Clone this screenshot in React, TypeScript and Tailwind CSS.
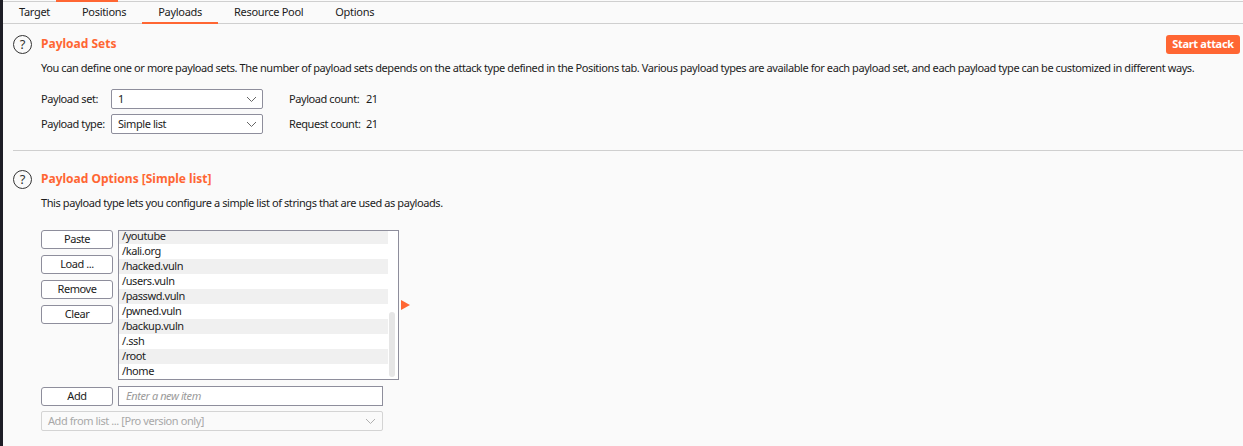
import React from 'react';

const tabs = ['Target', 'Positions', 'Payloads', 'Resource Pool', 'Options'];
const items = [
  '/youtube',
  '/kali.org',
  '/hacked.vuln',
  '/users.vuln',
  '/passwd.vuln',
  '/pwned.vuln',
  '/backup.vuln',
  '/.ssh',
  '/root',
  '/home',
];

const Help = () => (
  <div className="w-[19px] h-[19px] rounded-full border border-[#333] flex items-center justify-center text-[13px] leading-none tracking-normal text-[#333]">
    ?
  </div>
);

const Chevron = ({ color = '#666' }: { color?: string }) => (
  <svg width="11" height="7" viewBox="0 0 11 7" fill="none">
    <path d="M1 1l4.5 4.5L10 1" stroke={color} strokeWidth="1" />
  </svg>
);

const Select = ({ value }: { value: string }) => (
  <div className="w-[152px] h-[20px] border border-[#8e8e9c] rounded-[2px] bg-white flex items-center justify-between pl-[6px] pr-[5px]">
    <span>{value}</span>
    <Chevron />
  </div>
);

const Btn = ({ label }: { label: string }) => (
  <div className="w-[72px] h-[19px] border border-[#8e8e9c] rounded-[3px] bg-white flex items-center justify-center">
    {label}
  </div>
);

export default function App() {
  return (
    <div className="flex w-[1243px] h-[446px] bg-[#fafafa] text-[11px] tracking-[-0.42px] text-[#1c1c1c] overflow-hidden font-['Noto_Sans',sans-serif] whitespace-nowrap">
      <div className="w-[3px] bg-[#1e1e26] shrink-0" />
      <div className="flex-1 flex flex-col">
        <div className="h-[2px] border-b border-[#cfcfcf] relative">
          <div className="absolute left-[53px] top-0 w-[62px] h-[2px] bg-[#ff6633]" />
        </div>
        <div className="h-[22px] flex border-b border-[#cfcfcf] tracking-[-0.3px]">
          {tabs.map((t) => (
            <div
              key={t}
              className={
                t === 'Payloads'
                  ? 'px-4 flex items-center border-b-2 border-[#ff6633] mb-[-1px]'
                  : 'px-4 flex items-center'
              }
            >
              {t}
            </div>
          ))}
        </div>

        <div className="flex flex-col">
          <div className="pl-[10px] pr-[3px] mt-[10px] h-[20px] flex items-center">
            <Help />
            <span className="ml-[9px] text-[12px] tracking-normal font-bold text-[#ff6633]">Payload Sets</span>
            <div className="ml-auto w-[74px] h-[19px] rounded-[3px] bg-[#ff6633] text-white font-bold tracking-[-0.3px] flex items-center justify-center">
              Start attack
            </div>
          </div>
          <div className="pl-[38px] mt-[6px] leading-[16px]">
            You can define one or more payload sets. The number of payload sets depends on the attack type defined in the Positions tab. Various payload types are available for each payload set, and each payload type can be customized in different ways.
          </div>
          <div className="pl-[38px] mt-[13px] flex flex-col gap-[5px]">
            <div className="flex items-center h-[20px]">
              <span className="w-[70px]">Payload set:</span>
              <Select value="1" />
              <span className="ml-[26px] w-[77px]">Payload count:</span>
              <span>21</span>
            </div>
            <div className="flex items-center h-[20px]">
              <span className="w-[70px]">Payload type:</span>
              <Select value="Simple list" />
              <span className="ml-[26px] w-[77px]">Request count:</span>
              <span>21</span>
            </div>
          </div>
          <div className="ml-[10px] mt-[16px] border-t border-[#cfcfcf]" />

          <div className="pl-[10px] mt-[18px] h-[20px] flex items-center">
            <Help />
            <span className="ml-[9px] text-[12px] tracking-normal font-bold text-[#ff6633]">Payload Options [Simple list]</span>
          </div>
          <div className="pl-[38px] mt-[6px] leading-[16px]">
            This payload type lets you configure a simple list of strings that are used as payloads.
          </div>

          <div className="pl-[38px] mt-[19px] flex items-center">
            <div className="flex flex-col gap-[6px] self-start">
              <Btn label="Paste" />
              <Btn label="Load ..." />
              <Btn label="Remove" />
              <Btn label="Clear" />
            </div>
            <div className="ml-[5px] w-[281px] h-[150px] border border-[#8e8e9c] bg-white flex overflow-hidden">
              <div className="flex-1 flex flex-col mt-[-2px]">
                {items.map((it, i) => (
                  <div key={it} className={i % 2 === 0 ? 'h-[15px] shrink-0 flex items-center pl-[3px] bg-[#f0f0f0]' : 'h-[15px] shrink-0 flex items-center pl-[3px]'}>
                    {it}
                  </div>
                ))}
              </div>
              <div className="w-[10px] pl-[1px] pr-[2px] pt-[81px]">
                <div className="w-[6px] h-[65px] rounded-full bg-[#e6e6e6]" />
              </div>
            </div>
            <svg className="ml-[2px]" width="9" height="10" viewBox="0 0 9 10">
              <polygon points="0,0 9,5 0,10" fill="#ff6633" />
            </svg>
          </div>

          <div className="pl-[38px] mt-[6px] flex items-center">
            <Btn label="Add" />
            <div className="ml-[5px] w-[265px] h-[20px] border border-[#8e8e9c] bg-white flex items-center pl-[7px] italic text-[#9a9a9a]">
              Enter a new item
            </div>
          </div>
          <div className="pl-[38px] mt-[5px]">
            <div className="w-[342px] h-[20px] border border-[#d4d4d4] rounded-[2px] flex items-center justify-between pl-[6px] pr-[6px] text-[#a8a8a8]">
              <span>Add from list ... [Pro version only]</span>
              <Chevron color="#b0b0b0" />
            </div>
          </div>
        </div>
      </div>
    </div>
  );
}
